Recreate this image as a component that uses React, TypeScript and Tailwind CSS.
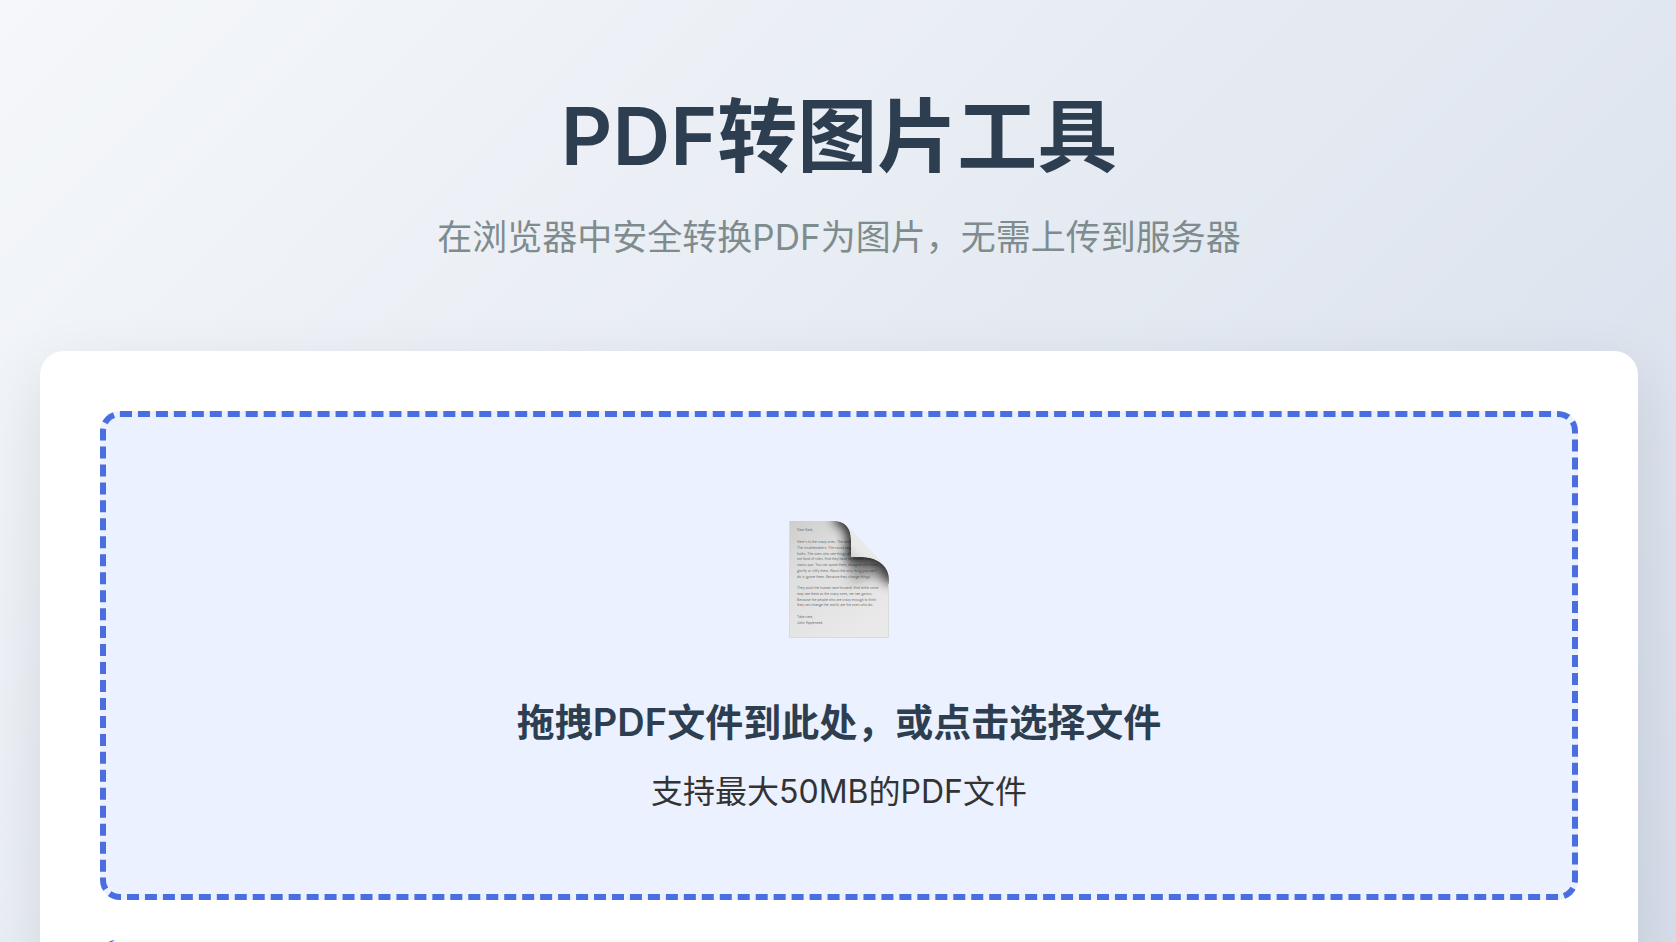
import React, { useRef, useState } from "react";

const letter = [
  { y: 11, text: "Dear Kate," },
  { y: 23, text: "Here's to the crazy ones. The misfits. The rebels." },
  { y: 29, text: "The troublemakers. The round pegs in the square" },
  { y: 35, text: "holes. The ones who see things differently. They're" },
  { y: 40, text: "not fond of rules. And they have no respect for the" },
  { y: 46, text: "status quo. You can quote them, disagree with them," },
  { y: 52, text: "glorify or vilify them. About the only thing you can't" },
  { y: 58, text: "do is ignore them. Because they change things." },
  { y: 69, text: "They push the human race forward. And while some" },
  { y: 75, text: "may see them as the crazy ones, we see genius." },
  { y: 81, text: "Because the people who are crazy enough to think" },
  { y: 86, text: "they can change the world, are the ones who do." },
  { y: 98, text: "Take care," },
  { y: 104, text: "John Appleseed" },
];

const PageIcon = () => {
  return (
    <svg width="100" height="118" viewBox="0 0 100 118" aria-hidden="true">
      <defs>
        <linearGradient id="paper" x1="0" y1="0" x2="0.6" y2="1">
          <stop offset="0" stopColor="#cdcdcd" />
          <stop offset="0.35" stopColor="#dedede" />
          <stop offset="1" stopColor="#e9e9e9" />
        </linearGradient>
        <linearGradient id="curl" x1="60" y1="38" x2="78" y2="20" gradientUnits="userSpaceOnUse">
          <stop offset="0" stopColor="#cccccc" />
          <stop offset="0.5" stopColor="#e8e8e8" />
          <stop offset="1" stopColor="#ebebeb" />
        </linearGradient>
        <filter id="soft" x="-50%" y="-50%" width="200%" height="200%">
          <feGaussianBlur stdDeviation="6" />
        </filter>
        <clipPath id="sheet">
          <path d="M0 1H44C56 1 62 8 62 20V37H72C90 37 100 47 100 60V118H0Z" />
        </clipPath>
      </defs>
      <g clipPath="url(#sheet)">
        <rect width="100" height="118" fill="url(#paper)" />
        <g fill="#555" fillOpacity="0.9" fontFamily="Inter, sans-serif" fontSize="3.3">
          {letter.map((line) => (
            <text key={line.y} x="8" y={line.y}>{line.text}</text>
          ))}
        </g>
        <path d="M46 -4C60 -2 65 8 65 20V36H80C94 38 102 48 105 62" fill="none" stroke="#000" strokeOpacity="0.9" strokeWidth="14" filter="url(#soft)" />
        <path d="M62 37H78C92 39 100 48 100 62C86 54 72 56 62 64Z" fill="#333" fillOpacity="0.45" filter="url(#soft)" />
        <path d="M0.5 1V117.5H99.5V64" fill="none" stroke="#dadada" strokeWidth="1" />
      </g>
      <path d="M48 1C58 2 62 9 62 20V37H72C86 37 94 43 98 50C96 46 93 43 90 39L61 8C57 4 53 1 48 1Z" fill="url(#curl)" />
    </svg>
  );
};

const App = () => {
  const inputRef = useRef<HTMLInputElement>(null);
  const [file, setFile] = useState<File | null>(null);

  const handleDrop = (e: React.DragEvent) => {
    e.preventDefault();
    setFile(e.dataTransfer.files[0] || null);
  };

  return (
    <div lang="zh-CN" className="h-screen overflow-hidden bg-linear-135 from-[#f5f7fa] to-[#d6deeb] pt-20 pr-[38px] pl-10 font-['Inter','Noto_Sans_CJK_SC',sans-serif] text-[#333]">
      <header className="mb-[85px] text-center">
        <h1 className="mb-4 text-[80px] leading-[112px] font-semibold text-[#2c3e50]">PDF转图片工具</h1>
        <p className="text-[35px] leading-[58px] text-[#7f8c8d]">在浏览器中安全转换PDF为图片，无需上传到服务器</p>
      </header>

      <main className="rounded-3xl bg-white p-[60px] shadow-[0_20px_60px_rgba(0,0,0,0.1)]">
        <button
          type="button"
          onClick={() => inputRef.current?.click()}
          onDragOver={(e) => e.preventDefault()}
          onDrop={handleDrop}
          className="flex w-full cursor-pointer flex-col items-center rounded-[20px] border-[6px] border-dashed border-[#4a6ee0] bg-[#ebf1ff] pt-[103px] pb-[76px]"
        >
          <PageIcon />
          <span className="mt-[54px] text-[38px] leading-[60px] font-semibold text-[#2c3e50]">拖拽PDF文件到此处，或点击选择文件</span>
          <span className="mt-[14px] text-[32px] leading-[52px]">{file ? file.name : "支持最大50MB的PDF文件"}</span>
        </button>
        <input
          ref={inputRef}
          type="file"
          accept="application/pdf"
          aria-label="选择文件"
          className="hidden"
          onChange={(e) => setFile(e.target.files?.[0] || null)}
        />

        <section className="mt-10 h-60 rounded-2xl border-l-8 border-[#4a6ee0] bg-[#f9f9f9]" />
      </main>
    </div>
  );
};

export default App;
